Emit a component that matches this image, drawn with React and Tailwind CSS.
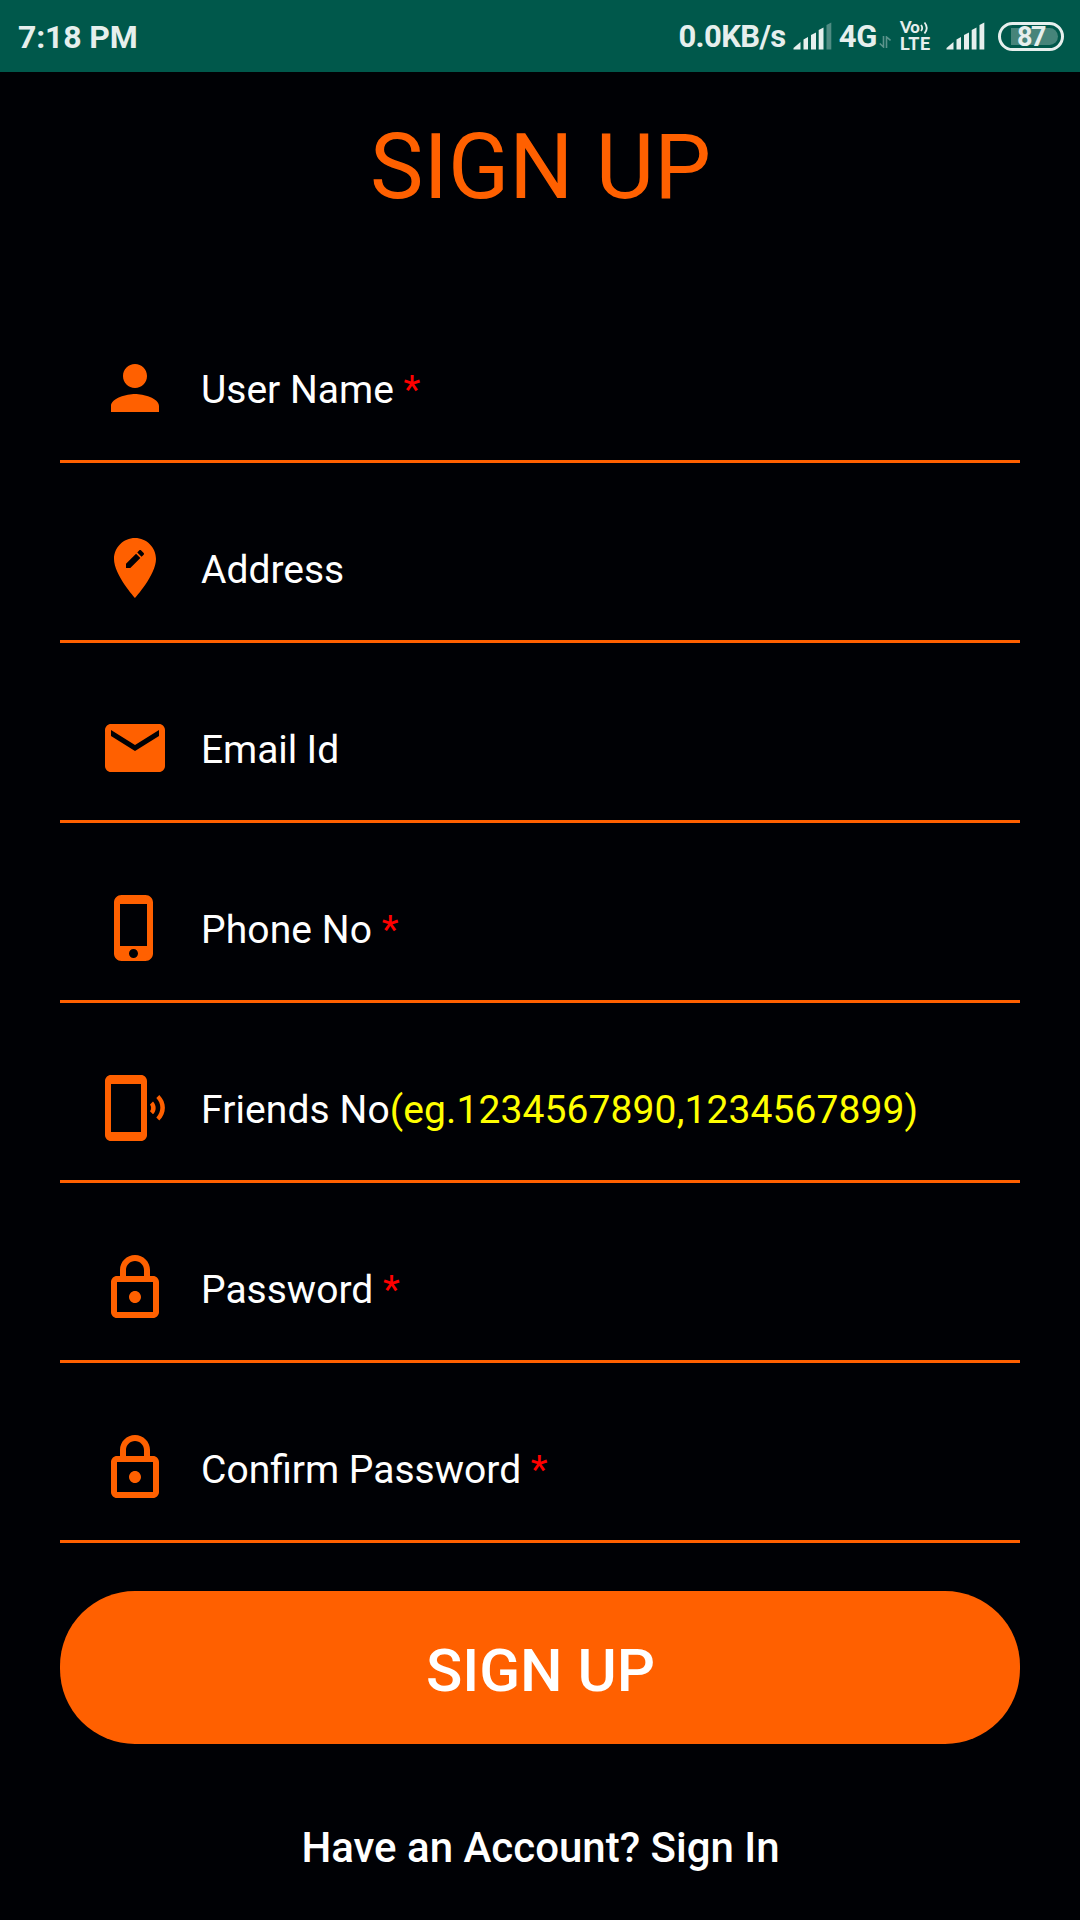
const ICONS = {
  person: "M12 12c2.21 0 4-1.79 4-4s-1.79-4-4-4-4 1.79-4 4 1.79 4 4 4zm0 2c-2.67 0-8 1.34-8 4v2h16v-2c0-2.66-5.33-4-8-4z",
  address: "M12 2C8.14 2 5 5.14 5 9c0 5.25 7 13 7 13s7-7.75 7-13c0-3.86-3.14-7-7-7zm-1.56 10H9v-1.44l3.35-3.34 1.43 1.43L10.44 12zm4.45-4.45l-.7.7-1.44-1.44.7-.7c.15-.15.39-.15.54 0l.9.9c.15.15.15.39 0 .54z",
  email: "M20 4H4c-1.1 0-1.99.9-1.99 2L2 18c0 1.1.9 2 2 2h16c1.1 0 2-.9 2-2V6c0-1.1-.9-2-2-2zm0 4l-8 5-8-5V6l8 5 8-5v2z",
  phone: "M15.5 1h-8C6.12 1 5 2.12 5 3.5v17C5 21.88 6.12 23 7.5 23h8c1.38 0 2.5-1.12 2.5-2.5v-17C18 2.12 16.88 1 15.5 1zm-4 21c-.83 0-1.5-.67-1.5-1.5s.67-1.5 1.5-1.5 1.5.67 1.5 1.5-.67 1.5-1.5 1.5zm4.5-4H7V4h9v14z",
  ring: "M20.1 7.7l-1 1c1.8 1.8 1.8 4.6 0 6.5l1 1c2.5-2.3 2.5-6.1 0-8.5zM18 9.8l-1 1c.5.7.5 1.6 0 2.3l1 1c1.2-1.2 1.2-3 0-4.3zM14 1H4c-1.1 0-2 .9-2 2v18c0 1.1.9 2 2 2h10c1.1 0 2-.9 2-2V3c0-1.1-.9-2-2-2zm0 19H4V4h10v16z",
  lock: "M12 17c1.1 0 2-.9 2-2s-.9-2-2-2-2 .9-2 2 .9 2 2 2zm6-9h-1V6c0-2.76-2.24-5-5-5S7 3.24 7 6v2H6c-1.1 0-2 .9-2 2v10c0 1.1.9 2 2 2h12c1.1 0 2-.9 2-2V10c0-1.1-.9-2-2-2zM9 6c0-1.66 1.34-3 3-3s3 1.34 3 3v2H9V6zM18 20H6V10h12v10z",
};

const FIELDS = [
  { icon: "person", label: "User Name", required: true },
  { icon: "address", label: "Address" },
  { icon: "email", label: "Email Id", tracking: "tracking-[-0.1px]" },
  { icon: "phone", label: "Phone No", required: true, tracking: "tracking-[0.1px]" },
  { icon: "ring", label: "Friends No", hint: "(eg.1234567890,1234567899)", tracking: "tracking-[0.1px]" },
  { icon: "lock", label: "Password", required: true },
  { icon: "lock", label: "Confirm Password", required: true },
];

function Signal({ weak, className }) {
  return (
    <svg viewBox="0 0 39 28" className={className} fill="currentColor">
      <path d="M0.5 27.5V26L7.5 20V27.5z" />
      <path d="M10.5 27.5V17.5L15 15V27.5z" />
      <path d="M18 27.5V13L23 10.5V27.5z" />
      <path d="M25.7 27.5V8L30.5 5.5V27.5z" />
      <path d="M33.5 27.5V3L38.3 0.5V27.5z" opacity={weak ? 0.35 : 1} />
    </svg>
  );
}

function StatusBar() {
  return (
    <header className="flex h-[72px] items-center bg-[#00584b] text-[#e6efed]">
      <span className="mt-[2px] ml-[18px] text-[32px] leading-[38px] font-bold tracking-[-0.15px] whitespace-pre">7:18 PM</span>
      <span className="mt-[2px] ml-auto text-[31px] leading-[38px] font-bold tracking-[-0.6px]">0.0KB/s</span>
      <Signal weak className="ml-[7px] h-[28px] w-[39px]" />
      <span className="mt-[2px] ml-[7px] text-[31px] leading-[38px] font-bold tracking-[-0.3px]">4G</span>
      <svg viewBox="0 0 12 12" className="mt-3 ml-[2px] h-3 w-3 opacity-40" fill="none" stroke="currentColor" strokeWidth="1.6">
        <path d="M4.5 0V11L0.8 7.5M7.5 12V1L11.5 4.5" />
      </svg>
      <div className="ml-[9px] flex h-[30px] w-[32px] flex-col font-bold">
        <div className="flex h-[14px] items-center">
          <span className="h-[14px] font-['Lato',sans-serif] text-[16.5px] leading-[13px] font-black">Vo</span>
          <svg viewBox="0 0 9 14" className="h-[14px] w-[9px] shrink-0" fill="none" stroke="currentColor" strokeWidth="1.8">
            <path d="M1 4Q3.4 7 1 10M4.5 1.5Q9 7 4.5 12.5" />
          </svg>
        </div>
        <span className="mt-px text-[18px] leading-[16px] tracking-[0.5px]">LTE</span>
      </div>
      <Signal className="ml-[14px] h-[28px] w-[39px]" />
      <div className="mr-4 ml-[13px] flex h-[29px] w-[66px] rounded-full border-[3px] border-current p-[3px]">
        <div className="ml-[7px] flex flex-1 items-center rounded-l-sm rounded-r-full bg-[#46847a] pt-[2px] pl-[6px] text-[27px] leading-none font-bold tracking-[-1.5px]">
          87
        </div>
      </div>
    </header>
  );
}

function Field({ icon, label, required, hint, tracking }) {
  return (
    <div className="flex h-[180px] items-end border-b-[3px] border-[#ff6000] pb-[36px] pl-[39px]">
      <svg viewBox="0 0 24 24" className="h-[72px] w-[72px] shrink-0" fill="#ff6000">
        <path d={ICONS[icon]} />
      </svg>
      <label className={`ml-[30px] text-[39px] leading-[68px] whitespace-pre text-white ${tracking ?? ""}`}>
        {label}
        {required && <span className="text-[#ff0000]"> *</span>}
        {hint && <span className="text-[#ffff00]">{hint}</span>}
      </label>
    </div>
  );
}

export default function App() {
  return (
    <div className="flex h-[1920px] w-[1080px] flex-col overflow-hidden bg-[#000105] font-['Roboto',sans-serif]">
      <StatusBar />
      <main className="flex flex-col px-[60px]">
        <h1 className="mt-[43px] pl-px text-center text-[90px] leading-[106px] text-[#ff6000]">SIGN UP</h1>
        <form className="mt-[62px] flex flex-col">
          {FIELDS.map((field) => (
            <Field key={field.label} {...field} />
          ))}
        </form>
        <button className="mt-[48px] h-[153px] rounded-[75px] bg-[#ff6000] pt-[6px] pl-px text-[60px] leading-[70px] font-medium text-white">
          SIGN UP
        </button>
        <p className="mt-[79px] pl-px text-center text-[42px] leading-[50px] font-medium text-white">Have an Account? Sign In</p>
      </main>
    </div>
  );
}
